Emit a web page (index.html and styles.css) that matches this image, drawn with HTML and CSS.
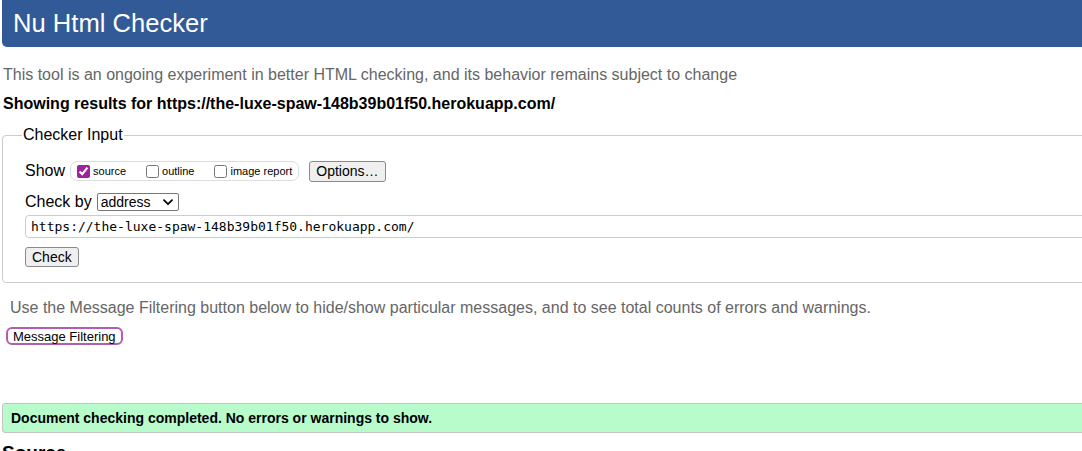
FILE: index.html
```html
<!DOCTYPE html>
<html lang="en">
<head>
<meta charset="utf-8">
<title>Nu Html Checker</title>
<link rel="stylesheet" href="styles.css">
</head>
<body>
<div class="page">
  <h1 class="title">Nu Html Checker</h1>
  <p class="intro">This tool is an ongoing experiment in better HTML checking, and its behavior remains subject to change</p>
  <p class="showing">Showing results for https://the-luxe-spaw-148b39b01f50.herokuapp.com/</p>
  <fieldset class="checker">
    <legend>Checker Input</legend>
    <div class="row show-row">
      <span class="row-label">Show</span>
      <span class="show-group">
        <label class="opt"><input type="checkbox" checked> source</label>
        <label class="opt"><input type="checkbox"> outline</label>
        <label class="opt last"><input type="checkbox"> image report</label>
      </span>
      <button class="btn options">Options…</button>
    </div>
    <div class="row by-row">
      <span class="row-label">Check by</span>
      <span class="select">address<svg class="chev" width="10" height="7" viewBox="0 0 10 7"><path d="M1 1.2 L5 5.2 L9 1.2" fill="none" stroke="#000" stroke-width="1.8" stroke-linecap="round" stroke-linejoin="round"/></svg></span>
    </div>
    <div class="url">https://the-luxe-spaw-148b39b01f50.herokuapp.com/</div>
    <div class="row check-row"><button class="btn check">Check</button></div>
  </fieldset>
  <p class="filter-note">Use the Message Filtering button below to hide/show particular messages, and to see total counts of errors and warnings.</p>
  <button class="btn filtering">Message Filtering</button>
  <div class="success">Document checking completed. No errors or warnings to show.</div>
  <h2 class="source">Source</h2>
</div>
</body>
</html>
```

FILE: styles.css
```css
html { overflow: hidden; }
body {
  margin: 0;
  font-family: "Liberation Sans", Arial, sans-serif;
  color: #000;
  background: #fff;
}
.page { width: 1200px; }

.title {
  margin: 0 0 0 2px;
  height: 47px;
  line-height: 47px;
  padding-left: 11px;
  background: #325a96;
  color: #fff;
  font-size: 25.6px;
  font-weight: normal;
  border-radius: 0 0 0 5px;
}

.intro {
  margin: 19px 0 0 3px;
  font-size: 16px;
  color: #666;
}
.showing {
  margin: 11px 0 0 3px;
  font-size: 16px;
  font-weight: bold;
}

.checker {
  margin: 13px 0 0 2px;
  padding: 16px 22px 15px 22px;
  border: 1px solid #ccc;
  border-radius: 4px;
}
.checker legend {
  padding: 0 1px;
  margin-left: -3px;
  font-size: 16px;
}
.row { display: flex; align-items: center; }
.row-label { font-size: 16px; }

.show-row { height: 22px; }
.show-group {
  display: flex;
  align-items: center;
  margin-left: 5px;
  height: 20px;
  border: 1px solid #ddd;
  border-radius: 7px;
  box-sizing: border-box;
  padding: 0 6px 0 6px;
  white-space: nowrap;
}
.opt {
  display: flex;
  align-items: center;
  font-size: 11px;
  margin-right: 20px;
  white-space: nowrap;
}
.opt.last { margin-right: 0; }
.opt input {
  margin: 0 3px 0 0;
  width: 13px;
  height: 13px;
  accent-color: #a1239a;
}
.btn {
  font-family: "Liberation Sans", Arial, sans-serif;
  background: #efefef;
  border: 1px solid #8a8a8a;
  border-radius: 3px;
  color: #000;
  padding: 0 6px;
}
.options {
  margin-left: 10px;
  height: 21px;
  font-size: 14px;
}

.by-row { margin-top: 10px; height: 20px; }
.select {
  display: flex;
  align-items: center;
  justify-content: space-between;
  margin-left: 5px;
  width: 82px;
  height: 18px;
  box-sizing: border-box;
  border: 1px solid #777;
  border-radius: 2px;
  padding: 0 5px 0 3px;
  font-size: 14px;
}
.url {
  margin-top: 3px;
  height: 23px;
  line-height: 21px;
  box-sizing: border-box;
  border: 1px solid #ccc;
  border-radius: 4px;
  padding-left: 5px;
  font-family: "DejaVu Sans Mono", monospace;
  font-size: 13px;
}
.check-row { margin-top: 9px; }
.check { height: 20px; font-size: 14px; padding: 0 6px; }

.filter-note {
  margin: 16px 0 0 10px;
  font-size: 16px;
  color: #666;
}
.filtering {
  display: block;
  margin: 10px 0 0 6px;
  height: 18px;
  padding: 0 5px;
  font-size: 13px;
  background: #fff;
  border: 2px solid #b25db2;
  border-radius: 6px;
}
.success {
  margin: 58px 0 0 2px;
  height: 30px;
  line-height: 28px;
  box-sizing: border-box;
  background: #b8fccb;
  border: 1px solid #c4c4c4;
  border-radius: 3px 0 0 3px;
  padding-left: 8px;
  font-size: 14px;
  font-weight: bold;
}
.source {
  margin: 9px 0 0 2px;
  font-size: 19px;
  font-weight: bold;
}
```
